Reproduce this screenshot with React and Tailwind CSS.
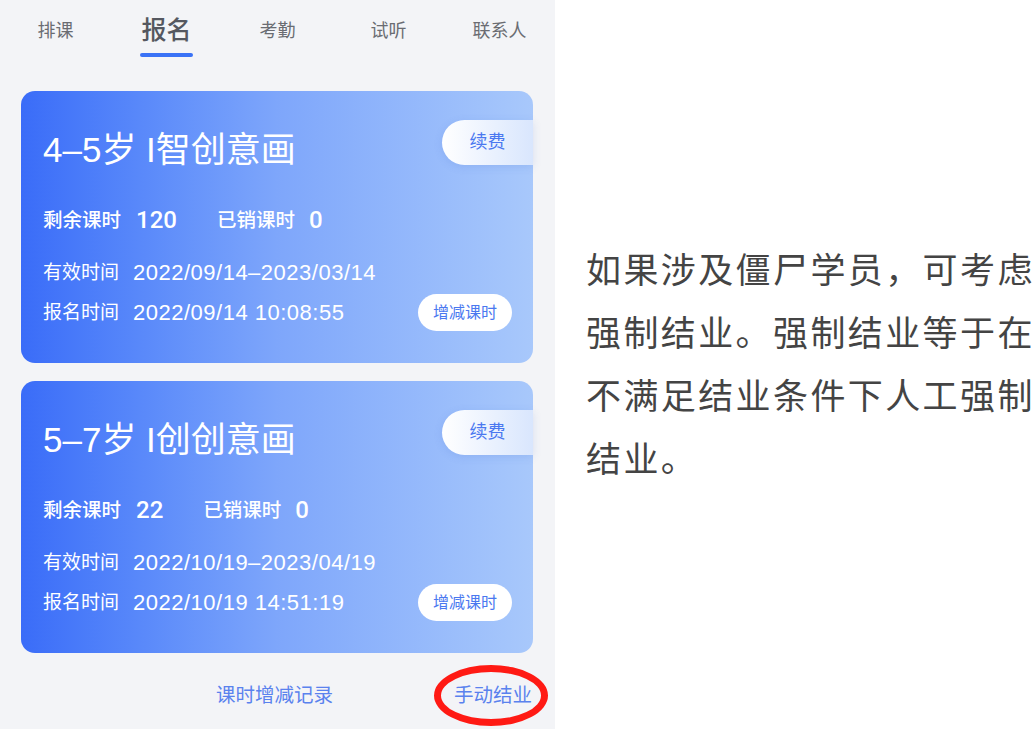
import React from 'react';

const tabs = ['排课', '报名', '考勤', '试听', '联系人'];

const courses = [
  {
    title: '4–5岁 I智创意画',
    left: '120',
    used: '0',
    valid: '2022/09/14–2023/03/14',
    signed: '2022/09/14 10:08:55',
  },
  {
    title: '5–7岁 I创创意画',
    left: '22',
    used: '0',
    valid: '2022/10/19–2023/04/19',
    signed: '2022/10/19 14:51:19',
  },
];

const CourseCard = ({ course }) => (
  <div className="relative h-[272px] rounded-[14px] bg-gradient-to-r from-[#3a6cf8] via-[#7ea6fb] to-[#a8c8fb] pl-[22px] pr-[21px] text-white">
    {/* renew tab on the right edge */}
    <div className="absolute right-0 top-[29px] flex h-[45px] w-[91px] items-center justify-center rounded-l-full bg-gradient-to-r from-white to-[#d9e6fd] text-[18px] text-[#4a78f0] shadow-[0_2px_8px_rgba(60,100,200,0.15)]">
      续费
    </div>

    <div className="pt-[39px] text-[35px] leading-[40px]">{course.title}</div>

    <div className="mt-[35px] flex items-center leading-[30px]">
      <span className="text-[19.5px] font-medium">剩余课时</span>
      <span className="ml-[15px] text-[24px] font-medium" style={{ fontFamily: 'Roboto, "Liberation Sans", sans-serif' }}>
        {course.left}
      </span>
      <span className="ml-[40px] text-[19.5px] font-medium">已销课时</span>
      <span className="ml-[14px] text-[24px] font-medium" style={{ fontFamily: 'Roboto, "Liberation Sans", sans-serif' }}>
        {course.used}
      </span>
    </div>

    <div className="mt-[25px] flex items-center text-[19px] leading-[26px]">
      <span>有效时间</span>
      <span className="ml-[14px] text-[22px] tracking-[0.5px]">{course.valid}</span>
    </div>

    <div className="mt-[8px] flex items-center justify-between text-[19px] leading-[26px]">
      <div className="flex items-center">
        <span>报名时间</span>
        <span className="ml-[14px] text-[22px] tracking-[0.5px]">{course.signed}</span>
      </div>
      <div className="flex h-[37px] w-[94px] items-center justify-center rounded-full bg-white text-[16px] text-[#4a78f0]">
        增减课时
      </div>
    </div>
  </div>
);

export default function App() {
  return (
    <div
      className="flex h-[729px] w-[1035px] overflow-hidden bg-white"
      style={{ fontFamily: '"Liberation Sans", "Noto Sans CJK SC", sans-serif' }}
    >
      {/* left phone panel */}
      <div className="flex w-[555px] flex-col bg-[#f3f4f7]">
        <div className="grid h-[62px] grid-cols-5">
          {tabs.map((t) => (
            <div key={t} className="flex flex-col items-center pt-[18px]">
              {t === '报名' ? (
                <>
                  <span className="mt-[-5px] text-[25px] font-medium leading-[34px] text-[#555860]">{t}</span>
                  <span className="mt-[6px] h-[4px] w-[53px] rounded-full bg-[#3a72f6]" />
                </>
              ) : (
                <span className="text-[18px] leading-[26px] text-[#6a6c72]">{t}</span>
              )}
            </div>
          ))}
        </div>

        <div className="mt-[29px] flex flex-col gap-[18px] pl-[21px] pr-[22px]">
          {courses.map((c) => (
            <CourseCard key={c.title} course={c} />
          ))}
        </div>

        <div className="mt-[12px] flex items-center pl-[216px] text-[19.5px] text-[#5a82ee]">
          <span>课时增减记录</span>
          <div className="relative ml-[101px] flex h-[61px] w-[114px] items-center justify-center">
            <span className="absolute inset-0 rounded-[50%] border-[7px] border-[#ff1a14]" />
            <span className="relative pl-[4px]">手动结业</span>
          </div>
        </div>
      </div>

      {/* right explanation text */}
      <div className="flex flex-1 items-center pl-[31px] pt-[1px]">
        <p className="text-[35px] leading-[63px] tracking-[2.4px] text-[#444444]">
          如果涉及僵尸学员，可考虑
          <br />
          强制结业。强制结业等于在
          <br />
          不满足结业条件下人工强制
          <br />
          结业。
        </p>
      </div>
    </div>
  );
}
